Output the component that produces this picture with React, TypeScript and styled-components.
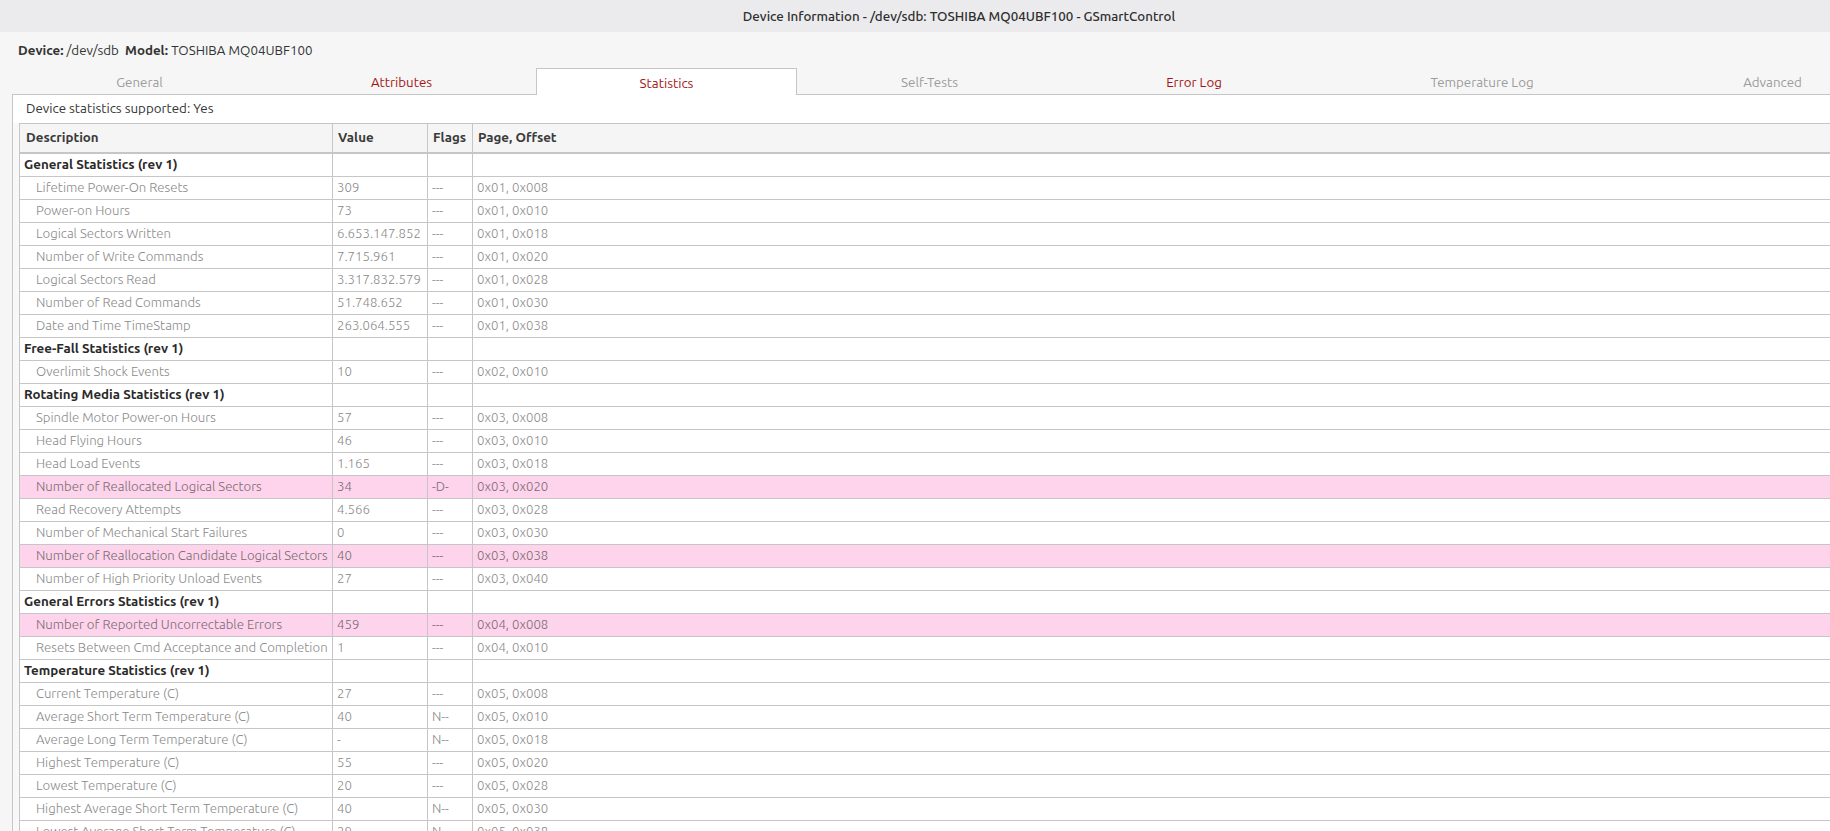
import React from 'react'
import styled, { createGlobalStyle } from 'styled-components'

const colors = {
  window: '#f6f6f6',
  titleBar: '#ebebed',
  border: '#c6c6c6',
  text: '#333333',
  muted: '#8a8a8a',
  red: '#a31515',
  pink: '#fdd4eb',
}

const GlobalStyle = createGlobalStyle`
  html, body {
    margin: 0;
    padding: 0;
    height: 100%;
    overflow: hidden;
    background: ${colors.window};
  }
  body {
    font-family: Ubuntu, Roboto, "Liberation Sans", sans-serif;
    font-size: 13.33px;
    color: ${colors.text};
  }
  #root {
    height: 100%;
  }
`

type Row =
  | { kind: 'group'; label: string }
  | { kind: 'item'; label: string; value: string; flags: string; offset: string; warn?: boolean }

const rows: Row[] = [
  { kind: 'group', label: 'General Statistics (rev 1)' },
  { kind: 'item', label: 'Lifetime Power-On Resets', value: '309', flags: '---', offset: '0x01, 0x008' },
  { kind: 'item', label: 'Power-on Hours', value: '73', flags: '---', offset: '0x01, 0x010' },
  { kind: 'item', label: 'Logical Sectors Written', value: '6.653.147.852', flags: '---', offset: '0x01, 0x018' },
  { kind: 'item', label: 'Number of Write Commands', value: '7.715.961', flags: '---', offset: '0x01, 0x020' },
  { kind: 'item', label: 'Logical Sectors Read', value: '3.317.832.579', flags: '---', offset: '0x01, 0x028' },
  { kind: 'item', label: 'Number of Read Commands', value: '51.748.652', flags: '---', offset: '0x01, 0x030' },
  { kind: 'item', label: 'Date and Time TimeStamp', value: '263.064.555', flags: '---', offset: '0x01, 0x038' },
  { kind: 'group', label: 'Free-Fall Statistics (rev 1)' },
  { kind: 'item', label: 'Overlimit Shock Events', value: '10', flags: '---', offset: '0x02, 0x010' },
  { kind: 'group', label: 'Rotating Media Statistics (rev 1)' },
  { kind: 'item', label: 'Spindle Motor Power-on Hours', value: '57', flags: '---', offset: '0x03, 0x008' },
  { kind: 'item', label: 'Head Flying Hours', value: '46', flags: '---', offset: '0x03, 0x010' },
  { kind: 'item', label: 'Head Load Events', value: '1.165', flags: '---', offset: '0x03, 0x018' },
  { kind: 'item', label: 'Number of Reallocated Logical Sectors', value: '34', flags: '-D-', offset: '0x03, 0x020', warn: true },
  { kind: 'item', label: 'Read Recovery Attempts', value: '4.566', flags: '---', offset: '0x03, 0x028' },
  { kind: 'item', label: 'Number of Mechanical Start Failures', value: '0', flags: '---', offset: '0x03, 0x030' },
  { kind: 'item', label: 'Number of Reallocation Candidate Logical Sectors', value: '40', flags: '---', offset: '0x03, 0x038', warn: true },
  { kind: 'item', label: 'Number of High Priority Unload Events', value: '27', flags: '---', offset: '0x03, 0x040' },
  { kind: 'group', label: 'General Errors Statistics (rev 1)' },
  { kind: 'item', label: 'Number of Reported Uncorrectable Errors', value: '459', flags: '---', offset: '0x04, 0x008', warn: true },
  { kind: 'item', label: 'Resets Between Cmd Acceptance and Completion', value: '1', flags: '---', offset: '0x04, 0x010' },
  { kind: 'group', label: 'Temperature Statistics (rev 1)' },
  { kind: 'item', label: 'Current Temperature (C)', value: '27', flags: '---', offset: '0x05, 0x008' },
  { kind: 'item', label: 'Average Short Term Temperature (C)', value: '40', flags: 'N--', offset: '0x05, 0x010' },
  { kind: 'item', label: 'Average Long Term Temperature (C)', value: '-', flags: 'N--', offset: '0x05, 0x018' },
  { kind: 'item', label: 'Highest Temperature (C)', value: '55', flags: '---', offset: '0x05, 0x020' },
  { kind: 'item', label: 'Lowest Temperature (C)', value: '20', flags: '---', offset: '0x05, 0x028' },
  { kind: 'item', label: 'Highest Average Short Term Temperature (C)', value: '40', flags: 'N--', offset: '0x05, 0x030' },
  { kind: 'item', label: 'Lowest Average Short Term Temperature (C)', value: '29', flags: 'N--', offset: '0x05, 0x038' },
]

const tabs = [
  { label: 'General', width: 255, tone: 'gray' },
  { label: 'Attributes', width: 269, tone: 'red' },
  { label: 'Statistics', width: 261, tone: 'red', active: true },
  { label: 'Self-Tests', width: 265, tone: 'gray' },
  { label: 'Error Log', width: 264, tone: 'red' },
  { label: 'Temperature Log', width: 312, tone: 'gray' },
  { label: 'Advanced', width: 269, tone: 'gray' },
]

const App: React.FunctionComponent = () => {
  return (
    <Window>
      <GlobalStyle />
      <TitleBar>Device Information - /dev/sdb: TOSHIBA MQ04UBF100 - GSmartControl</TitleBar>
      <InfoLine>
        <b>Device:</b> /dev/sdb&nbsp;&nbsp;<b>Model:</b> TOSHIBA MQ04UBF100
      </InfoLine>
      <TabStrip>
        {tabs.map((t) => (
          <Tab key={t.label} width={t.width} tone={t.tone} active={!!t.active}>
            {t.label}
          </Tab>
        ))}
      </TabStrip>
      <Panel>
        <Supported>Device statistics supported: Yes</Supported>
        <TableFrame>
          <Grid>
            <HeadCell>Description</HeadCell>
            <HeadCell>Value</HeadCell>
            <HeadCell>Flags</HeadCell>
            <HeadCell>Page, Offset</HeadCell>
            {rows.map((r, i) =>
              r.kind === 'group' ? (
                <React.Fragment key={i}>
                  <GroupCell>{r.label}</GroupCell>
                  <Cell />
                  <Cell />
                  <Cell />
                </React.Fragment>
              ) : (
                <React.Fragment key={i}>
                  <ItemCell warn={!!r.warn}>{r.label}</ItemCell>
                  <Cell warn={!!r.warn}>{r.value}</Cell>
                  <Cell warn={!!r.warn}>{r.flags}</Cell>
                  <Cell warn={!!r.warn}>{r.offset}</Cell>
                </React.Fragment>
              )
            )}
          </Grid>
        </TableFrame>
      </Panel>
    </Window>
  )
}

export default App

const Window = styled.div`
  display: flex;
  flex-direction: column;
  width: 1918px;
  height: 100vh;
  overflow: hidden;
`

const TitleBar = styled.div`
  height: 32px;
  flex: none;
  display: flex;
  align-items: center;
  justify-content: center;
  background: ${colors.titleBar};
  font-weight: 500;
  color: #2e2e2e;
`

const InfoLine = styled.div`
  height: 36px;
  flex: none;
  display: flex;
  align-items: center;
  padding-left: 18px;
  padding-top: 1px;
  box-sizing: border-box;
  white-space: pre;
  b {
    font-weight: 700;
  }
`

const TabStrip = styled.div`
  display: flex;
  flex: none;
  height: 26px;
  margin-left: 12px;
  border-bottom: 1px solid ${colors.border};
`

const Tab = styled.div<{ width: number; tone: string; active: boolean }>`
  flex: none;
  width: ${(p) => p.width}px;
  box-sizing: border-box;
  display: flex;
  align-items: center;
  justify-content: center;
  padding-top: 2px;
  color: ${(p) => (p.tone === 'red' ? colors.red : '#9c9c9c')};
  white-space: nowrap;
  ${(p) =>
    p.active &&
    `
    background: #fff;
    border: 1px solid ${colors.border};
    border-bottom: none;
    margin-bottom: -1px;
    height: 27px;
  `}
`

const Panel = styled.div`
  flex: 1;
  margin-left: 12px;
  border-left: 1px solid ${colors.border};
  background: #fff;
  display: flex;
  flex-direction: column;
  overflow: hidden;
`

const Supported = styled.div`
  height: 28px;
  flex: none;
  display: flex;
  align-items: center;
  padding-left: 13px;
  padding-bottom: 2px;
  box-sizing: border-box;
`

const TableFrame = styled.div`
  flex: 1;
  padding-left: 6px;
  background: #f8f8f8;
  overflow: hidden;
`

const Grid = styled.div`
  display: grid;
  grid-template-columns: 313px 95px 45px 1fr;
  grid-template-rows: 30px;
  grid-auto-rows: 23px;
  background: #fff;
  border-left: 1px solid ${colors.border};
  border-top: 1px solid ${colors.border};
`

const BaseCell = styled.div`
  box-sizing: border-box;
  display: flex;
  align-items: center;
  padding-left: 4px;
  padding-bottom: 2px;
  white-space: nowrap;
  overflow: hidden;
  border-bottom: 1px solid ${colors.border};
  border-right: 1px solid ${colors.border};
  &:nth-child(4n) {
    border-right: none;
  }
`

const HeadCell = styled(BaseCell)`
  padding-left: 5px;
  background: #f5f5f5;
  border-bottom: 2px solid ${colors.border};
  font-weight: 700;
  color: #3a3a3a;
  &:first-child {
    padding-left: 6px;
  }
`

const GroupCell = styled(BaseCell)`
  font-weight: 700;
  color: #2a2a2a;
`

const Cell = styled(BaseCell)<{ warn?: boolean }>`
  font-size: 13.2px;
  font-weight: 300;
  color: ${(p) => (p.warn ? '#7a6a70' : colors.muted)};
  background: ${(p) => (p.warn ? colors.pink : '#fff')};
`

const ItemCell = styled(Cell)`
  padding-left: 16px;
`
